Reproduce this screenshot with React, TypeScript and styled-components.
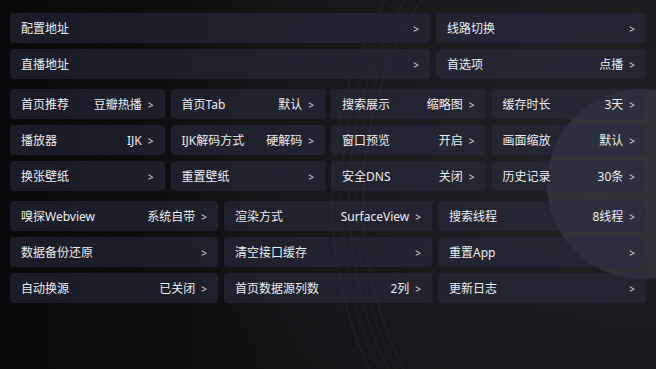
import { createGlobalStyle, styled } from "styled-components";

type Item = { label: string; value?: string };

const sections: { cols: string; items: Item[] }[] = [
	{
		cols: "2fr 1fr",
		items: [
			{ label: "配置地址" },
			{ label: "线路切换" },
			{ label: "直播地址" },
			{ label: "首选项", value: "点播" },
		],
	},
	{
		cols: "repeat(4, 1fr)",
		items: [
			{ label: "首页推荐", value: "豆瓣热播" },
			{ label: "首页Tab", value: "默认" },
			{ label: "搜索展示", value: "缩略图" },
			{ label: "缓存时长", value: "3天" },
			{ label: "播放器", value: "IJK" },
			{ label: "IJK解码方式", value: "硬解码" },
			{ label: "窗口预览", value: "开启" },
			{ label: "画面缩放", value: "默认" },
			{ label: "换张壁纸" },
			{ label: "重置壁纸" },
			{ label: "安全DNS", value: "关闭" },
			{ label: "历史记录", value: "30条" },
		],
	},
	{
		cols: "repeat(3, 1fr)",
		items: [
			{ label: "嗅探Webview", value: "系统自带" },
			{ label: "渲染方式", value: "SurfaceView" },
			{ label: "搜索线程", value: "8线程" },
			{ label: "数据备份还原" },
			{ label: "清空接口缓存" },
			{ label: "重置App" },
			{ label: "自动换源", value: "已关闭" },
			{ label: "首页数据源列数", value: "2列" },
			{ label: "更新日志" },
		],
	},
];

export default function App() {
	return (
		<>
			<GlobalStyle />
			<Screen>
				{/* vinyl record wallpaper: grooves + label disc */}
				<Record viewBox="0 0 656 369" preserveAspectRatio="none">
					{[372, 379, 386, 394, 403].map((r, i) => (
						<circle
							key={r}
							cx="735"
							cy="200"
							r={r}
							fill="none"
							stroke={`rgba(255,255,255,${i % 2 ? 0.035 : 0.06})`}
							strokeWidth="1"
						/>
					))}
					<circle cx="642" cy="184" r="95" fill="rgba(130,132,142,0.2)" />
				</Record>
				<Content>
					{sections.map((section, i) => (
						<Section key={i} $cols={section.cols}>
							{section.items.map((item) => (
								<Row key={item.label}>
									<Label>{item.label}</Label>
									<Value>
										{item.value && <span>{item.value}</span>}
										<Arrow>&gt;</Arrow>
									</Value>
								</Row>
							))}
						</Section>
					))}
				</Content>
			</Screen>
		</>
	);
}

const GlobalStyle = createGlobalStyle`
	html, body {
		margin: 0;
		padding: 0;
		background: #0c0c0e;
	}

	body {
		font-family: "Noto Sans", "Noto Sans CJK SC", sans-serif;
		color: #ececee;
	}
`;

const Screen = styled.div`
	position: relative;
	width: 656px;
	height: 369px;
	overflow: hidden;
	background:
		radial-gradient(ellipse 420px 300px at 560px 150px, rgba(40, 41, 46, 0.55), transparent),
		linear-gradient(90deg, #09090a 0%, #121315 45%, #17181b 100%);
`;

const Record = styled.svg`
	position: absolute;
	inset: 0;
	width: 100%;
	height: 100%;
`;

const Content = styled.div`
	position: relative;
	display: flex;
	flex-direction: column;
	gap: 10px;
	padding: 13px 10px 0;
`;

const Section = styled.div<{ $cols: string }>`
	display: grid;
	grid-template-columns: ${(p) => p.$cols};
	gap: 6px;
`;

const Row = styled.div`
	height: 30px;
	display: flex;
	align-items: center;
	justify-content: space-between;
	padding: 0 11px;
	border-radius: 4px;
	background: rgba(40, 46, 64, 0.55);
	font-size: 12px;
	white-space: nowrap;
`;

const Label = styled.span`
	color: #ededf0;
`;

const Value = styled.span`
	display: flex;
	align-items: center;
	gap: 6px;
	color: #ededf0;
`;

const Arrow = styled.span`
	font-size: 10px;
	padding-top: 1px;
	color: #dcdce0;
`;
